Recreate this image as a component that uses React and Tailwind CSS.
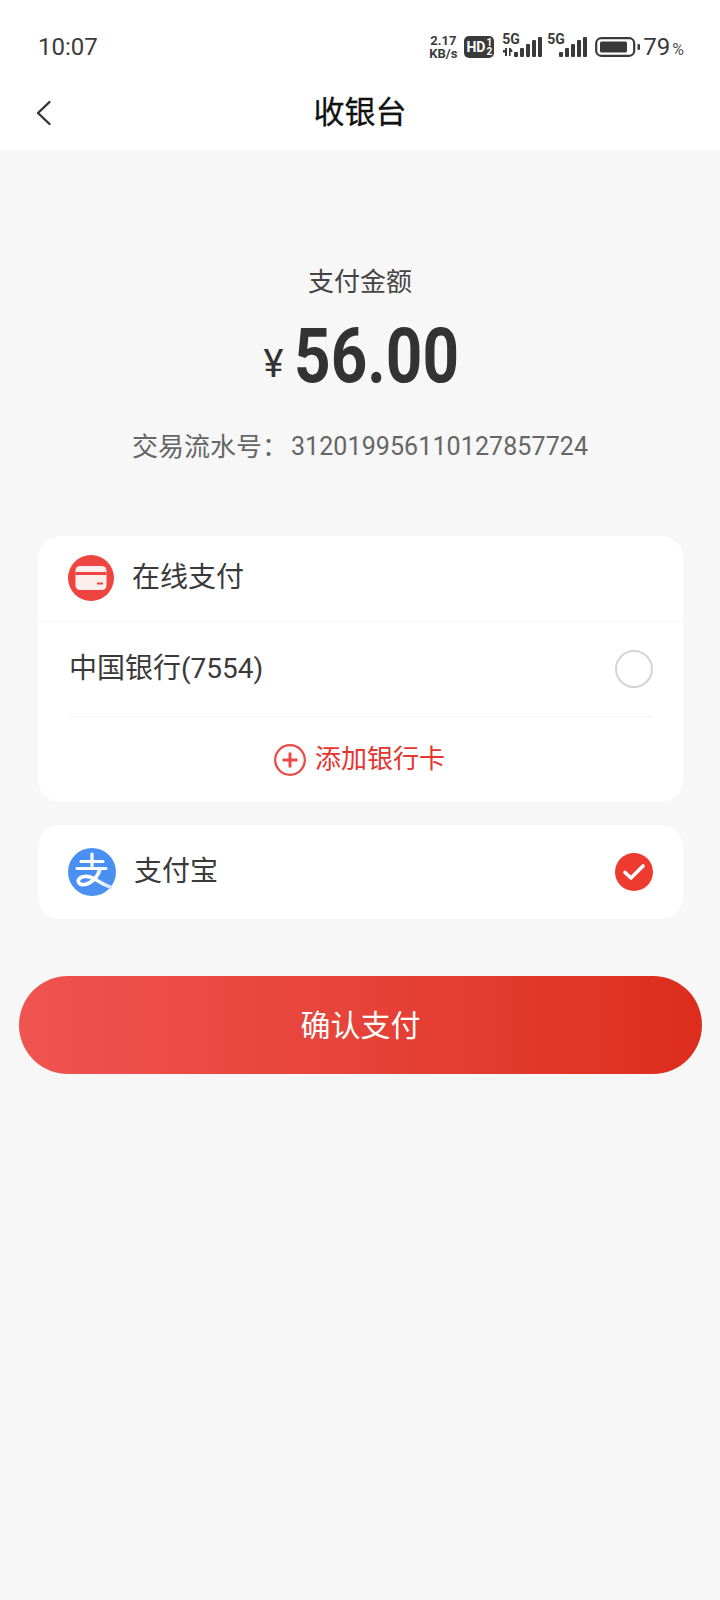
const cjk = { fontFamily: '"Roboto", "Noto Sans CJK SC", sans-serif' }

function Signal({ arrows }) {
  return (
    <div className="relative w-[40px] h-[24px]">
      <span className="absolute left-0 top-[-4px] text-[14px] leading-[16px] font-bold text-[#3a3a3a]">5G</span>
      <svg width="40" height="24" viewBox="0 0 40 24" className="absolute left-0 top-0" fill="#3a3a3a">
        {arrows && <path d="M1 15h2v-2l2 0v8H3v-3.5H1zM7 13h1.6l1.800 2.400v1.600H8.600v4H7z" />}
        <rect x="12" y="17" width="4" height="5" rx="1" />
        <rect x="18" y="13" width="4" height="9" rx="1" />
        <rect x="24" y="9" width="4" height="13" rx="1" />
        <rect x="30" y="5" width="4" height="17" rx="1" />
        <rect x="36" y="2" width="4" height="20" rx="1" />
      </svg>
    </div>
  )
}

function StatusBar() {
  return (
    <div className="h-[76px] pl-[38px] pr-[36px] flex justify-between items-center pt-[18px]">
      <span className="text-[24px] text-[#3c3c3c]" style={cjk}>10:07</span>
      <div className="flex items-center text-[#3a3a3a]">
        <div className="flex flex-col items-center text-[13px] leading-[13px] font-bold w-[32px] mr-[5px]">
          <span>2.17</span>
          <span>KB/s</span>
        </div>
        <div className="w-[30px] h-[22px] bg-[#3a3a3a] rounded-[5px] flex items-center justify-center text-white font-bold mr-[8px]">
          <span className="text-[14px] leading-none">HD</span>
          <span className="flex flex-col text-[10px] leading-[9px] ml-[1px]"><span>1</span><span>2</span></span>
        </div>
        <Signal arrows />
        <div className="w-[5px]" />
        <Signal />
        <svg width="46" height="24" viewBox="0 0 46 24" className="ml-[8px]">
          <rect x="1.200" y="3.200" width="38" height="17.600" rx="5" fill="none" stroke="#3a3a3a" strokeWidth="2.200" />
          <rect x="5" y="6.500" width="27" height="11" rx="1.500" fill="#3a3a3a" />
          <rect x="42.500" y="9" width="2.500" height="6" rx="1" fill="#3a3a3a" />
        </svg>
        <span className="text-[24px] leading-none ml-[2px]" style={cjk}>79</span>
        <span className="text-[16px] leading-none mt-[6px] ml-[2px] text-[#555]" style={cjk}>%</span>
      </div>
    </div>
  )
}

function Header() {
  return (
    <div className="relative h-[74px] flex items-center justify-center bg-white">
      <button className="absolute left-[35px] top-[24px]">
        <svg width="17" height="26" viewBox="0 0 17 26" fill="none" stroke="#333" strokeWidth="2.400" strokeLinecap="round" strokeLinejoin="round">
          <path d="M14.500 2 3 13l11.500 11" />
        </svg>
      </button>
      <h1 className="text-[31px] text-[#111] [-webkit-text-stroke:0.3px_#111]">收银台</h1>
    </div>
  )
}

function CardIcon() {
  return (
    <svg width="46" height="46" viewBox="0 0 46 46">
      <circle cx="23" cy="23" r="23" fill="#ee4540" />
      <rect x="7.500" y="11" width="31" height="24" rx="4.500" fill="#fdeeee" />
      <rect x="7.500" y="17" width="31" height="3" fill="#ee4540" />
      <rect x="29" y="27.500" width="6" height="2" fill="#ee4540" />
    </svg>
  )
}

function AlipayIcon() {
  return (
    <svg width="48" height="48" viewBox="0 0 48 48">
      <defs>
        <linearGradient id="tail" x1="0" x2="1" y1="0" y2="0">
          <stop offset="0.550" stopColor="#fff" />
          <stop offset="1" stopColor="#cfe2fb" />
        </linearGradient>
      </defs>
      <circle cx="24" cy="24" r="24" fill="#4a90f2" />
      <path d="M13 13.500h22M24 6v14M9 20.500h29" fill="none" stroke="#fff" strokeWidth="3.200" strokeLinecap="round" />
      <path d="M32 21c-2 8-9 14.500-15 15.500-5 .8-7.500-2-6.500-4.500 1.500-4 9-5 15-1.500 6 3 11 7 17 8.500" fill="none" stroke="url(#tail)" strokeWidth="3.600" strokeLinecap="round" />
    </svg>
  )
}

export default function App() {
  return (
    <div className="min-h-[1600px] bg-[#f7f7f7] text-[#3a3a3a]" style={cjk}>
      <div className="bg-white">
        <StatusBar />
        <Header />
      </div>

      <div className="flex flex-col items-center pt-[112px]">
        <p className="text-[26px] leading-[40px] text-[#444]">支付金额</p>
        <div className="flex items-center mt-[9px] h-[90px] pl-[3px]">
          <span className="text-[38px] mt-[16px] mr-[11px] text-[#333]">¥</span>
          <span className="text-[76px] leading-none font-bold text-[#333] inline-block scale-x-[0.84] origin-left w-[165px] whitespace-nowrap">56.00</span>
        </div>
        <p className="mt-[26px] text-[#666] flex items-center h-[40px]">
          <span className="text-[26px] mr-[3px]">交易流水号：</span>
          <span className="text-[25px] tracking-[0.1px]">312019956110127857724</span>
        </p>
      </div>

      <div className="ml-[38px] mr-[37px] mt-[69px] bg-white rounded-[22px]">
        <div className="h-[86px] px-[30px] pb-[1px] flex items-center gap-[18px] border-b border-[#f8f8f8]">
          <CardIcon />
          <span className="text-[28px]">在线支付</span>
        </div>
        <div className="ml-[31px] mr-[30px] h-[95px] flex items-center justify-between border-b border-[#f4f4f4]">
          <span className="text-[28px]">中国银行(7554)</span>
          <span className="w-[38px] h-[38px] rounded-full border-2 border-[#d4d4d4]" />
        </div>
        <div className="h-[85px] flex items-center justify-center gap-[9px] pr-[2px] text-[#e5352f]">
          <svg width="32" height="32" viewBox="0 0 32 32" fill="none" stroke="#ea4a46">
            <circle cx="16" cy="16" r="14.800" strokeWidth="2.200" />
            <path d="M8.500 16h15M16 8.500v15" strokeWidth="3" />
          </svg>
          <span className="text-[26px]">添加银行卡</span>
        </div>
      </div>

      <div className="ml-[38px] mr-[37px] mt-[23px] h-[94px] bg-white rounded-[22px] pl-[30px] pr-[30px] flex items-center justify-between">
        <div className="flex items-center gap-[18px]">
          <AlipayIcon />
          <span className="text-[28px]">支付宝</span>
        </div>
        <span className="w-[38px] h-[38px] rounded-full bg-[#ee3b30] flex items-center justify-center">
          <svg width="24" height="20" viewBox="0 0 24 20" fill="none" stroke="#fff" strokeWidth="3.600" strokeLinecap="round" strokeLinejoin="round">
            <path d="M3 10.500 9 16 21 4" />
          </svg>
        </span>
      </div>

      <button className="block mx-[19px] mt-[57px] w-[683px] h-[98px] rounded-full bg-gradient-to-r from-[#ef5450] to-[#dd2d1c] text-white text-[30px]">
        确认支付
      </button>
    </div>
  )
}
